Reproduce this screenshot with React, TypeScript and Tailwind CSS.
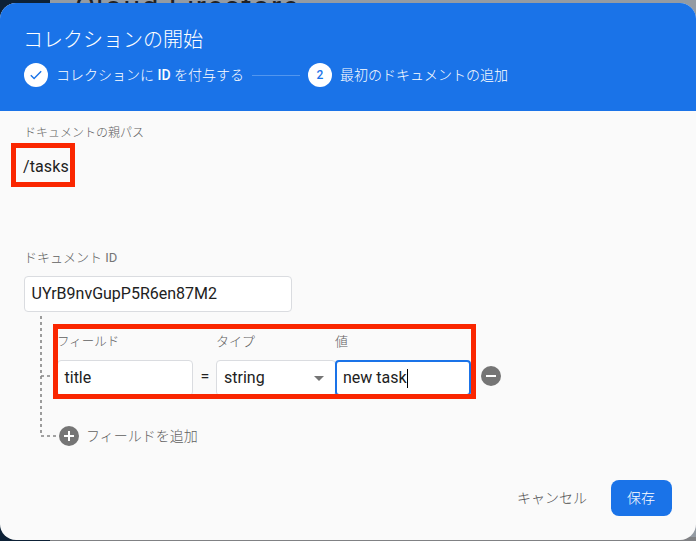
import React from "react";

const Highlight = ({ className }: { className: string }) => (
  <div className={`pointer-events-none absolute border-5 border-[#fa2600] ${className}`} />
);

const Label = ({ children, className = "text-[13px]" }: { children: React.ReactNode; className?: string }) => (
  <div className={`whitespace-nowrap font-light leading-4 text-[#606060] ${className}`}>{children}</div>
);

export default function App() {
  return (
    <div className="relative h-[541px] w-[696px] overflow-hidden bg-[#949ba3] font-['Roboto','Noto_Sans_CJK_JP',sans-serif]">
      <div className="flex h-full">
        <div className="w-[50px] bg-[#0d2136]" />
        <div className="flex flex-1 flex-col justify-between">
          <div className="h-1">
            <div className="-mt-[9px] ml-[25px] text-[30px] leading-8 tracking-[1.5px] text-[#202124]">Cloud Firestore</div>
          </div>
          <div className="h-1 bg-[#808184]" />
        </div>
      </div>

      <div className="absolute left-0 top-[3px] flex h-[537px] w-[696px] flex-col overflow-hidden rounded-2xl bg-[#fafafa]">
        <header className="h-[108px] shrink-0 bg-[#1a73e8] px-6 pt-[23px] text-white">
          <h1 className="-ml-px text-[20px] font-light leading-7">コレクションの開始</h1>
          <div className="mt-[9px] flex h-6 items-center text-[14px] leading-6">
            <span className="flex size-6 items-center justify-center rounded-full bg-white">
              <svg viewBox="0 0 12 10" className="h-[10px] w-3" fill="none" stroke="#1a73e8" strokeWidth="1.4">
                <path d="M.8 5.2 4.1 8.5 11.2 1.2" />
              </svg>
            </span>
            <span className="ml-2 w-[188px] whitespace-nowrap font-light">
              コレクションに <b className="font-medium">ID</b> を付与する
            </span>
            <span className="ml-2 h-px w-12 bg-[#5296ee]" />
            <span className="ml-2 flex size-6 items-center justify-center rounded-full bg-white text-[12px] font-medium text-[#1a73e8]">2</span>
            <span className="ml-2 whitespace-nowrap font-light">最初のドキュメントの追加</span>
          </div>
        </header>

        <main className="relative flex-1 px-6 pt-[14px]">
          <Label className="text-[12px]">ドキュメントの親パス</Label>
          <div className="-ml-px mt-[14px] text-[16px] leading-6 tracking-[0.1px] text-[#212121]">/tasks</div>

          <Label className="mt-[71px] text-[13px]">
            ドキュメント <span className="font-normal text-[#757575]">ID</span>
          </Label>
          <div className="mt-[10px] flex h-9 w-[268px] items-center rounded-[4px] border border-[#dadce0] bg-white px-[7px] text-[16px] text-[#212121]">
            <span className="-ml-[0.5px]">UYrB9nvGupP5R6en87M2</span>
          </div>

          <div className="relative ml-4 h-[125px] pl-[17px] pt-[22px]">
            <svg className="absolute left-0 top-[3px] h-[122px] w-4" fill="none" stroke="#858585" strokeWidth="1.6" strokeDasharray="3 3">
              <path d="M1 1V121H16M1 61H13" />
            </svg>
            <div className="flex">
              <Label className="w-[159px] text-[12.5px]">フィールド</Label>
              <Label className="w-[119px] text-[13px]">タイプ</Label>
              <Label>値</Label>
            </div>
            <div className="mt-[10px] flex h-9 items-stretch text-[16px] leading-[34px] text-[#212121]">
              <div className="w-[136px] rounded-[4px] border border-[#dadce0] bg-white px-[6.5px]">title</div>
              <div className="w-[23px] pl-px text-center text-[16px]">=</div>
              <div className="flex w-[120px] items-center justify-between rounded-[4px] border border-[#dadce0] bg-white pl-[7px] pr-[11px]">
                string
                <svg viewBox="0 0 10 5" className="h-[5px] w-[10px]" fill="#757575"><path d="M0 0h10L5 5z" /></svg>
              </div>
              <div className="-ml-px flex w-[136px] items-center rounded-[4px] border-2 border-[#1a73e8] bg-white px-[6px]">
                new task<span className="h-[19px] w-px bg-black" />
              </div>
              <svg viewBox="0 0 20 20" className="ml-[10px] mt-[6px] size-5">
                <circle cx="10" cy="10" r="10" fill="#757575" />
                <path d="M5 10h10" stroke="white" strokeWidth="2" />
              </svg>
            </div>
          </div>
          <div className="-mt-[11px] ml-[35px] flex h-5 items-center text-[14px] font-light text-[#606060]">
            <svg viewBox="0 0 20 20" className="size-5">
              <circle cx="10" cy="10" r="10" fill="#757575" />
              <path d="M5 10h10M10 5v10" stroke="white" strokeWidth="2" />
            </svg>
            <span className="ml-[7px]">フィールドを追加</span>
          </div>

          <div className="mt-[34px] flex items-center justify-end">
            <button className="mr-6 text-[14px] font-light text-[#505050]">キャンセル</button>
            <button className="h-9 w-[61px] rounded-lg bg-[#1a73e8] pr-px text-[14px] font-light text-white">保存</button>
          </div>
          <Highlight className="left-[11px] top-[32px] h-11 w-16" />
          <Highlight className="left-[53px] top-[213px] h-[75px] w-[423px]" />
        </main>
      </div>
    </div>
  );
}
